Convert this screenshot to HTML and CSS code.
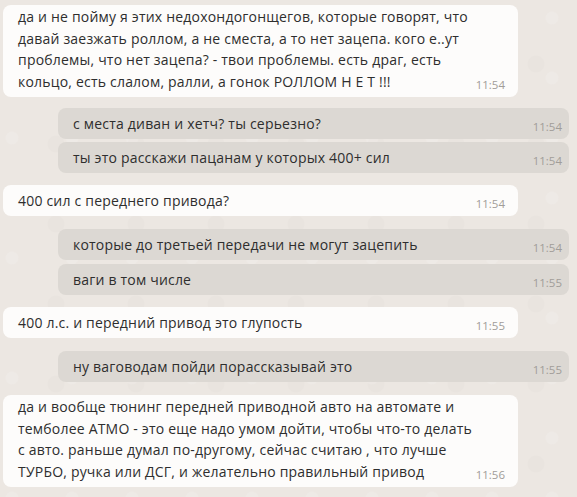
FILE: index.html
```html
<!DOCTYPE html>
<html lang="ru">
<head>
<meta charset="utf-8">
<link rel="stylesheet" href="styles.css">
</head>
<body>
<div class="chat">
  <div class="msg in multi">
    <div class="text">да и не пойму я этих недохондогонщегов, которые говорят, что давай заезжать роллом, а не сместа, а то нет зацепа. кого е..ут проблемы, что нет зацепа? - твои проблемы. есть драг, есть кольцо, есть слалом, ралли, а гонок РОЛЛОМ Н Е Т !!!</div>
    <span class="time">11:54</span>
  </div>
  <div class="msg out gap-s">
    <div class="text">с места диван и хетч? ты серьезно?</div>
    <span class="time">11:54</span>
  </div>
  <div class="msg out tight">
    <div class="text">ты это расскажи пацанам у которых 400+ сил</div>
    <span class="time">11:54</span>
  </div>
  <div class="msg in gap">
    <div class="text">400 сил с переднего привода?</div>
    <span class="time">11:54</span>
  </div>
  <div class="msg out gap-l">
    <div class="text">которые до третьей передачи не могут зацепить</div>
    <span class="time">11:54</span>
  </div>
  <div class="msg out tight-l">
    <div class="text">ваги в том числе</div>
    <span class="time">11:55</span>
  </div>
  <div class="msg in gap">
    <div class="text">400 л.с. и передний привод это глупость</div>
    <span class="time">11:55</span>
  </div>
  <div class="msg out gap-l">
    <div class="text">ну ваговодам пойди порассказывай это</div>
    <span class="time">11:55</span>
  </div>
  <div class="msg in multi gap-l">
    <div class="text">да и вообще тюнинг передней приводной авто на автомате и темболее АТМО - это еще надо умом дойти, чтобы что-то делать с авто. раньше думал по-другому, сейчас считаю , что лучше ТУРБО, ручка или ДСГ, и желательно правильный привод</div>
    <span class="time">11:56</span>
  </div>
</div>
</body>
</html>
```

FILE: styles.css
```css
html, body {
  margin: 0;
  padding: 0;
}
body {
  width: 577px;
  height: 497px;
  overflow: hidden;
  background-color: #ece7e2;
  background-image:
    radial-gradient(circle at 20% 30%, rgba(255,255,255,0.12) 0 6px, transparent 7px),
    radial-gradient(circle at 70% 80%, rgba(0,0,0,0.012) 0 8px, transparent 9px);
  background-size: 60px 60px, 80px 80px;
  font-family: "Open Sans", "Noto Sans", sans-serif;
  color: #2e2e2e;
}
.chat {
  display: flex;
  flex-direction: column;
  padding: 5px 0 0 0;
}
.msg {
  display: flex;
  align-items: flex-end;
  border-radius: 8px;
  box-sizing: border-box;
  height: 31px;
  padding: 5px 7px 5px 15px;
}
.msg.in {
  margin-left: 3px;
  width: 515px;
  background: #fdfcfb;
  padding-right: 13px;
}
.msg.out {
  margin-left: 58px;
  width: 511px;
  background: #dcd8d3;
}
.msg.multi {
  height: auto;
  padding-top: 1px;
  padding-bottom: 5px;
}
.gap-s { margin-top: 11px; }
.gap { margin-top: 12px; }
.gap-l { margin-top: 13px; }
.tight { margin-top: 3px; }
.tight-l { margin-top: 4px; }
.text {
  flex: 1;
  font-size: 14px;
  line-height: 21px;
  letter-spacing: 0.2px;
}
.multi .text {
  line-height: 21.5px;
}
.time {
  flex: none;
  font-size: 11.5px;
  line-height: 14px;
  color: #a19d99;
  margin-left: 3px;
}
```
